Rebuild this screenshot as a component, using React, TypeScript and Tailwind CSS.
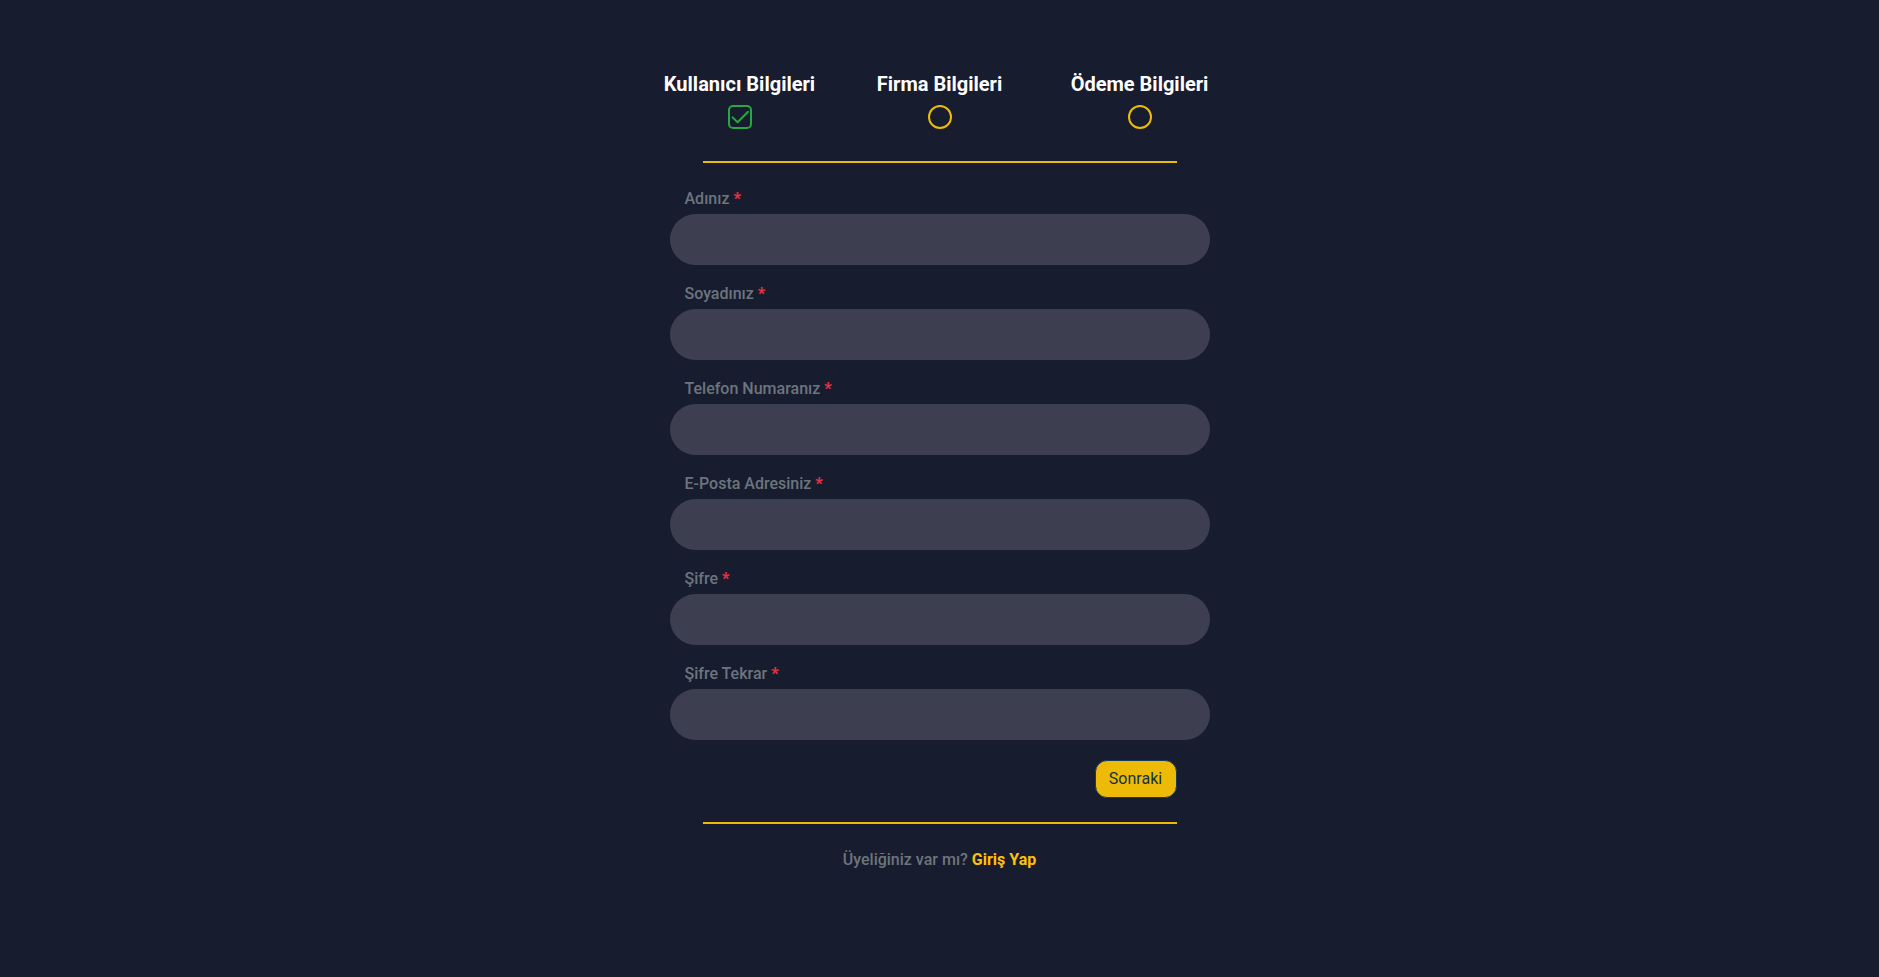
const steps = [
  { title: "Kullanıcı Bilgileri", done: true },
  { title: "Firma Bilgileri", done: false },
  { title: "Ödeme Bilgileri", done: false },
];

const fields = [
  { id: "first-name", label: "Adınız", type: "text" },
  { id: "last-name", label: "Soyadınız", type: "text" },
  { id: "phone", label: "Telefon Numaranız", type: "tel" },
  { id: "email", label: "E-Posta Adresiniz", type: "email" },
  { id: "password", label: "Şifre", type: "password" },
  { id: "password-repeat", label: "Şifre Tekrar", type: "password" },
];

function Divider() {
  return <hr className="mx-auto w-[474px] max-w-full border-0 border-t-2 border-[#edbb07]" />;
}

function StepIcon({ done }: { done: boolean }) {
  return (
    <svg
      viewBox="0 0 24 24"
      fill="none"
      stroke="currentColor"
      strokeWidth="2"
      aria-hidden="true"
      className={done ? "size-6 text-[#28a745]" : "size-6 text-[#edbb07]"}
    >
      {done ? (
        <>
          <rect x="1" y="1" width="22" height="22" rx="4" />
          <path d="M4.6 12.4 9.6 17.2 20 6.8" strokeLinecap="round" strokeLinejoin="round" />
        </>
      ) : (
        <circle cx="12" cy="12" r="11" />
      )}
    </svg>
  );
}

export default function App() {
  return (
    <main className="min-h-screen bg-[#181c2f] px-4 pt-[70px] pb-16 font-['Roboto','Noto_Sans',sans-serif] text-base font-medium text-[#6c757d]">
      <ol className="mx-auto grid max-w-[600px] grid-cols-3">
        {steps.map((step) => (
          <li key={step.title} className="flex flex-col items-center gap-[7px]">
            <h2 className="text-xl font-bold whitespace-nowrap text-white">{step.title}</h2>
            <StepIcon done={step.done} />
          </li>
        ))}
      </ol>

      <form className="mx-auto mt-8 max-w-[540px]" onSubmit={(event) => event.preventDefault()}>
        <Divider />
        <div className="mt-6 flex flex-col gap-[17px]">
          {fields.map((field) => (
            <div key={field.id} className="flex flex-col gap-[3px]">
              <label htmlFor={field.id} className="px-[15px] leading-6">
                {field.label} <span className="font-black text-[#e63244]">*</span>
              </label>
              <input
                id={field.id}
                type={field.type}
                required
                className="h-[51px] w-full rounded-full bg-[#3d3f51] px-6 text-white outline-none"
              />
            </div>
          ))}
        </div>
        <div className="mx-auto mt-5 mb-6 flex w-[474px] max-w-full justify-end">
          <button
            type="submit"
            className="h-[38px] w-[82px] rounded-xl border border-[#123a5c] bg-[#edbb07] font-normal text-[#123044]"
          >
            Sonraki
          </button>
        </div>
        <Divider />
      </form>

      <p className="mt-6 text-center">
        Üyeliğiniz var mı?{" "}
        <a href="#giris" className="font-bold text-[#ffc107]">
          Giriş Yap
        </a>
      </p>
    </main>
  );
}
